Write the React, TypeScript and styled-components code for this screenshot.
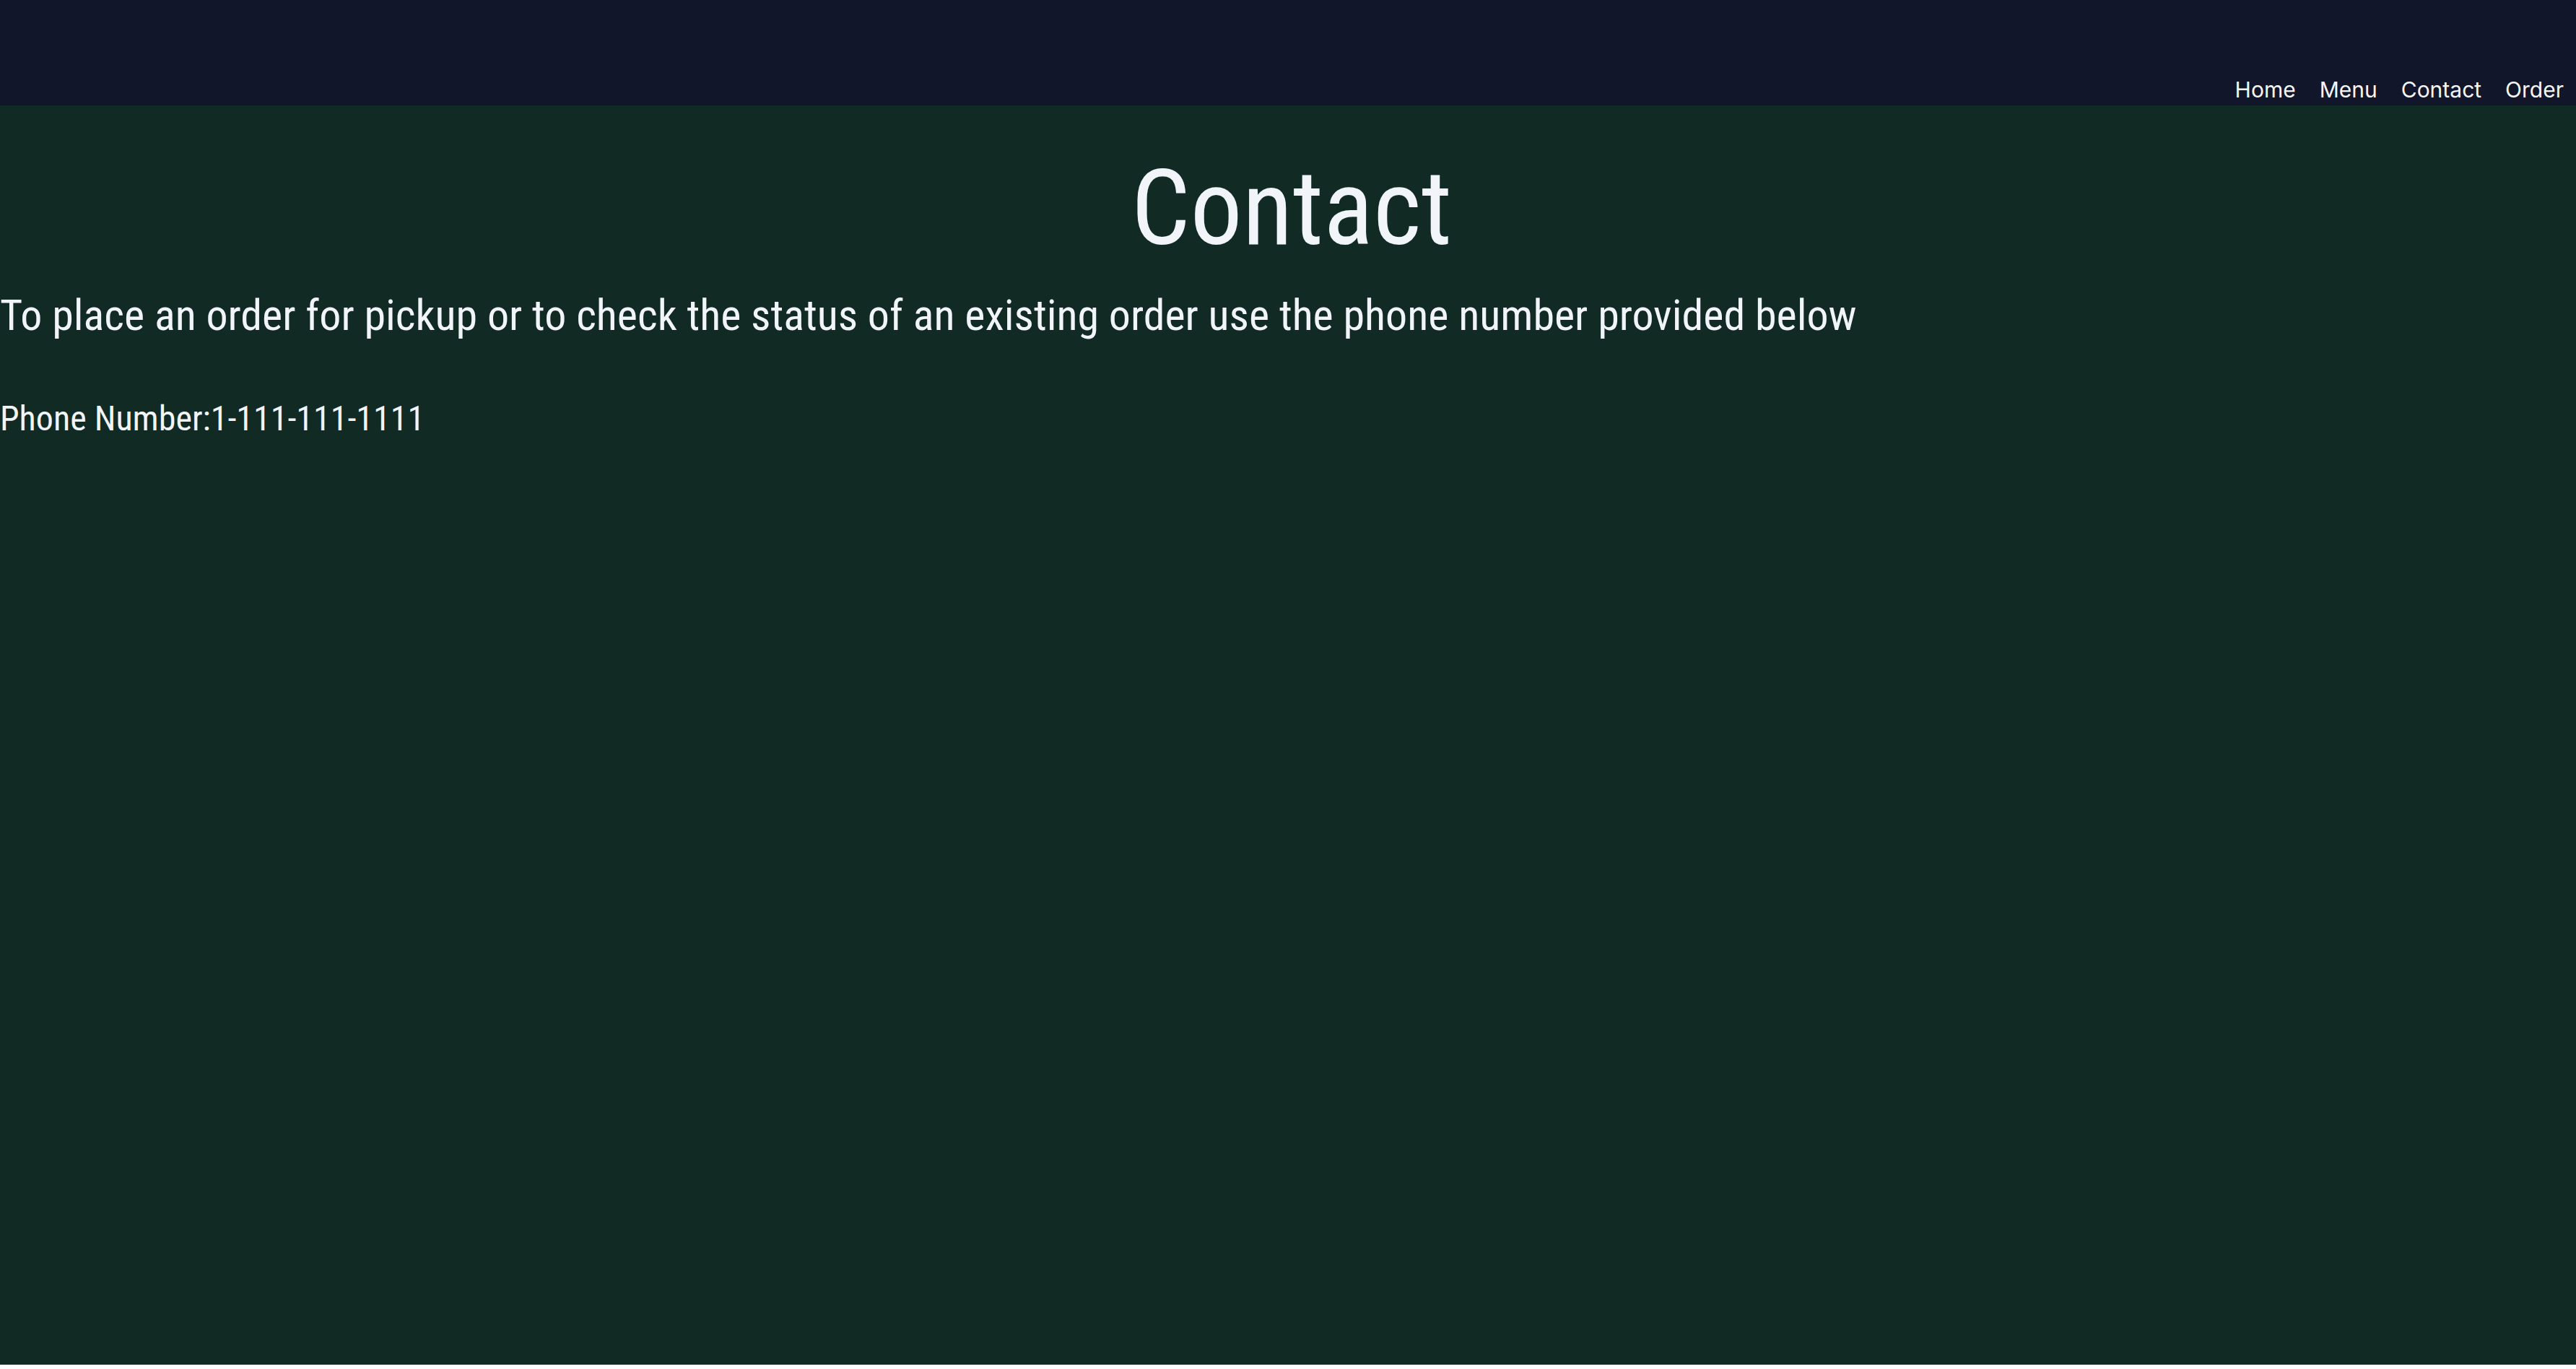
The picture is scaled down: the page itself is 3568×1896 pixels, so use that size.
import React from "react";
import styled, { createGlobalStyle } from "styled-components";

const GlobalStyle = createGlobalStyle`
  html, body {
    margin: 0;
    padding: 0;
    background: #ffffff;
  }
  * {
    box-sizing: border-box;
  }
`;

const Header = styled.header`
  height: 146px;
  background: #11162a;
  display: flex;
  justify-content: flex-end;
  align-items: flex-end;
  padding: 0 17px 4px 0;
`;

const Nav = styled.nav`
  display: flex;
  gap: 33px;
`;

const NavLink = styled.a`
  font-family: Inter, "Liberation Sans", sans-serif;
  font-size: 30px;
  color: #f5f6f8;
  text-decoration: none;
  cursor: pointer;
`;

const Main = styled.main`
  height: 1744px;
  background: #112a24;
  color: #f1f4f8;
  font-family: "Roboto Condensed", Roboto, "Liberation Sans Narrow", sans-serif;
  font-stretch: condensed;
  padding-top: 59px;
`;

const Title = styled.h1`
  margin: 0 0 0 10px;
  text-align: center;
  font-size: 144px;
  font-weight: 400;
  line-height: 168px;
`;

const Text = styled.p<{ $size: number; $top: number }>`
  margin: ${(p) => p.$top}px 0 0;
  font-size: ${(p) => p.$size}px;
  font-weight: 400;
`;

const App = () => {
    return (
        <>
            <GlobalStyle />
            <Header>
                <Nav>
                    <NavLink>Home</NavLink>
                    <NavLink>Menu</NavLink>
                    <NavLink>Contact</NavLink>
                    <NavLink>Order</NavLink>
                </Nav>
            </Header>
            <Main>
                <Title>Contact</Title>
                <Text $size={60} $top={28}>
                    To place an order for pickup or to check the status of an existing order use the phone number provided below
                </Text>
                <Text $size={48} $top={79}>Phone Number:1-111-111-1111</Text>
            </Main>
        </>
    );
};

export default App;
